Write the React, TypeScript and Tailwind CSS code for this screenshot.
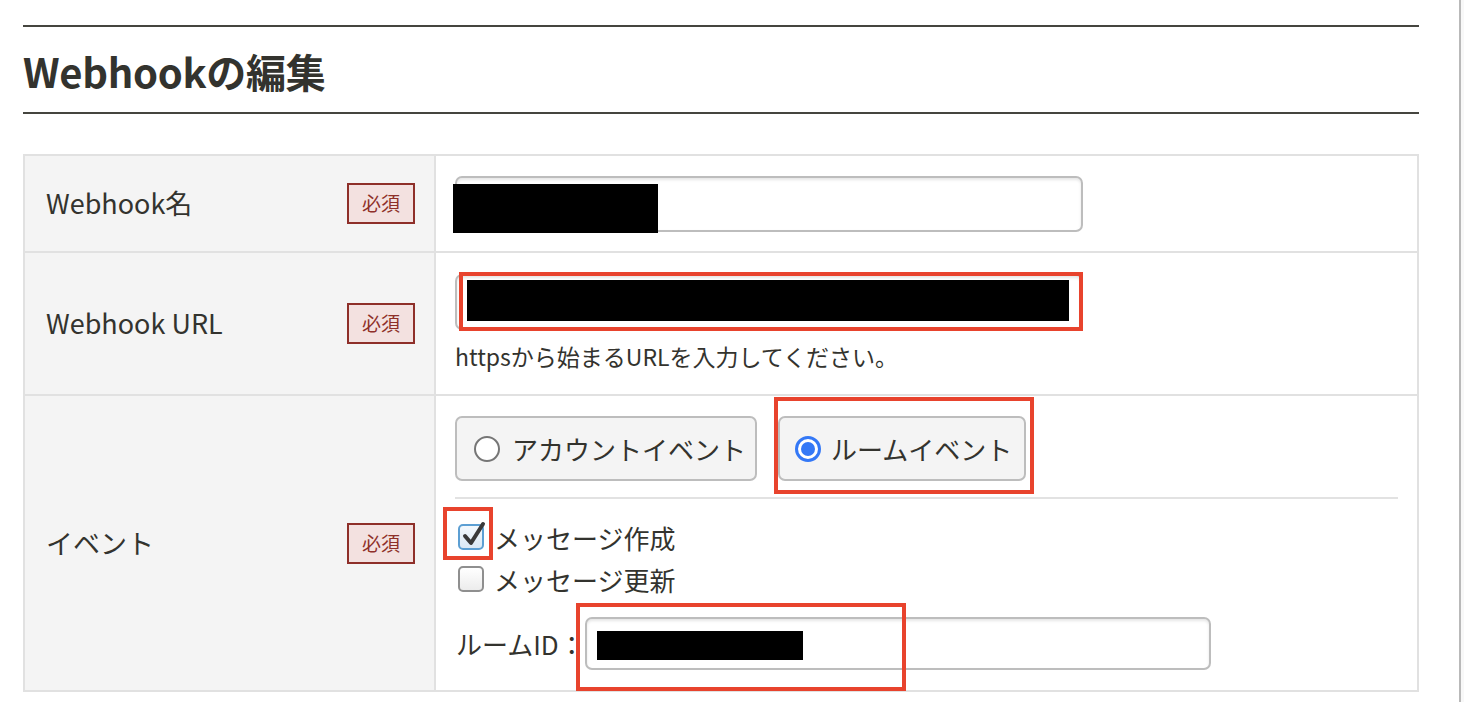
import React from "react";

const Badge = () => (
  <div className="flex h-[41px] w-[68px] items-center justify-center border-2 border-[#8e2f29] bg-[#f3e1e0] text-[19px] text-[#8e2f29]">
    必須
  </div>
);

const Label = ({ text }: { text: string }) => (
  <div className="flex items-center justify-between bg-[#f4f4f4] pl-[21px] pr-[19px]">
    <span className="text-[27px] text-[#33332e]">{text}</span>
    <Badge />
  </div>
);

const inputCls =
  "relative rounded-[7px] border-2 border-[#bdbdbd] bg-white shadow-[inset_0_2px_3px_rgba(0,0,0,0.10)]";

const RedBox = ({ cls }: { cls: string }) => (
  <div className={"pointer-events-none absolute border-[4px] border-[#e8432d] " + cls} />
);

const Radio = ({ checked }: { checked: boolean }) =>
  checked ? (
    <span className="flex h-[26px] w-[26px] items-center justify-center rounded-full border-[3px] border-[#3478f6] bg-white">
      <span className="h-[14px] w-[14px] rounded-full bg-[#3478f6]" />
    </span>
  ) : (
    <span className="h-[26px] w-[26px] rounded-full border-2 border-[#767676] bg-white" />
  );

const CheckedBox = () => (
  <span className="relative block h-[26px] w-[26px] rounded-[5px] border-2 border-[#5c9fd3] bg-gradient-to-b from-[#f4f9fd] to-[#dbe9f5]">
    <svg className="absolute left-[1px] top-[-5px]" width="26" height="28" viewBox="0 0 26 28">
      <path d="M4 15 L10 22 L22 3" fill="none" stroke="#3a3a3a" strokeWidth="4" strokeLinecap="round" strokeLinejoin="round" />
    </svg>
  </span>
);

const EmptyBox = () => (
  <span className="block h-[26px] w-[26px] rounded-[5px] border-2 border-[#8f8f8f] bg-gradient-to-b from-white to-[#ececec]" />
);

export default function App() {
  return (
    <div className="flex min-h-[702px] w-full bg-white font-['Noto_Sans_CJK_JP','Noto_Sans',sans-serif] text-[#33332e]">
      <div className="w-[1459px] shrink-0 pl-[23px] pt-[25px]">
        <div className="w-[1396px]">
          <div className="border-t-2 border-[#45453f]" />
          <h1 className="flex h-[85px] items-center pt-[2px] text-[40px] font-bold leading-none tracking-[-0.3px] text-[#33332e]">
            Webhookの編集
          </h1>
          <div className="border-t-2 border-[#45453f]" />

          <div className="mt-[40px] border-2 border-[#e1e1e1]">
            {/* Row 1 */}
            <div className="grid grid-cols-[409px_1fr] border-b-2 border-[#e1e1e1]">
              <Label text="Webhook名" />
              <div className="border-l-2 border-[#e1e1e1] bg-white pb-[19px] pl-[19px] pt-[20px]">
                <div className={inputCls + " h-[56px] w-[628px]"}>
                  <div className="absolute left-[-4px] top-[6px] h-[49px] w-[205px] bg-black" />
                </div>
              </div>
            </div>

            {/* Row 2 */}
            <div className="grid grid-cols-[409px_1fr] border-b-2 border-[#e1e1e1]">
              <Label text="Webhook URL" />
              <div className="border-l-2 border-[#e1e1e1] bg-white pb-[23px] pl-[19px] pt-[21px]">
                <div className={inputCls + " h-[56px] w-[628px]"}>
                  <div className="absolute left-[10px] top-[4px] h-[41px] w-[602px] bg-black" />
                  <RedBox cls="left-[2px] top-[-4px] h-[59px] w-[624px]" />
                </div>
                <p className="mt-[11px] text-[23px] leading-[30px] text-[#33332e]">
                  httpsから始まるURLを入力してください。
                </p>
              </div>
            </div>

            {/* Row 3 */}
            <div className="grid grid-cols-[409px_1fr]">
              <Label text="イベント" />
              <div className="border-l-2 border-[#e1e1e1] bg-white pb-[20px] pl-[19px] pr-[19px] pt-[20px]">
                <div className="flex gap-[21px]">
                  <div className="flex h-[65px] w-[302px] items-center gap-[12px] rounded-[7px] border-2 border-[#bdbdbd] bg-[#f4f4f4] pl-[17px]">
                    <Radio checked={false} />
                    <span className="text-[26px] text-[#33332e]">アカウントイベント</span>
                  </div>
                  <div className="relative flex h-[65px] w-[248px] items-center gap-[10px] rounded-[7px] border-2 border-[#bdbdbd] bg-[#f4f4f4] pl-[15px]">
                    <Radio checked={true} />
                    <span className="text-[26px] text-[#33332e]">ルームイベント</span>
                    <RedBox cls="left-[-6px] top-[-21px] h-[97px] w-[260px]" />
                  </div>
                </div>
                <div className="mt-[16px] border-t-2 border-[#e2e2e2]" />
                <div className="mt-[17px] flex h-[42px] items-center gap-[10px] pl-[3px]">
                  <span className="relative">
                    <CheckedBox />
                    <RedBox cls="left-[-15px] top-[-17px] h-[53px] w-[50px]" />
                  </span>
                  <span className="text-[26px] text-[#33332e]">メッセージ作成</span>
                </div>
                <div className="flex h-[42px] items-center gap-[10px] pl-[3px]">
                  <EmptyBox />
                  <span className="text-[26px] text-[#33332e]">メッセージ更新</span>
                </div>
                <div className="mt-[17px] flex items-center">
                  <span className="w-[130px] shrink-0 pl-[1px] text-[26px] text-[#33332e]">ルームID：</span>
                  <div className={inputCls + " h-[53px] w-[626px]"}>
                    <div className="absolute left-[10px] top-[12px] h-[29px] w-[206px] bg-black" />
                    <RedBox cls="left-[-11px] top-[-16px] h-[88px] w-[330px]" />
                  </div>
                </div>
              </div>
            </div>
          </div>
        </div>
      </div>
      <div className="w-[2px] shrink-0 bg-[#b9b9b9]" />
      <div className="flex-1 bg-[#f8f8f8]" />
    </div>
  );
}
